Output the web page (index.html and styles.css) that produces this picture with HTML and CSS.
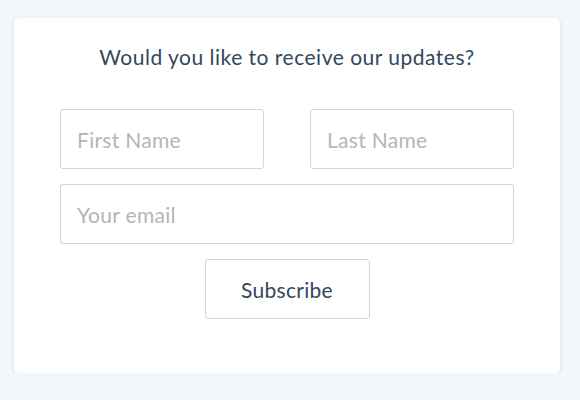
FILE: index.html
```html
<!DOCTYPE html>
<html lang="en">
<head>
    <meta charset="UTF-8">
    <title>Newsletter</title>
    <link rel="stylesheet" href="styles.css">
</head>
<body>
    <section class="signup-card">
        <h2 class="signup-title">Would you like to receive our updates?</h2>
        <form class="signup-form">
            <div class="name-row">
                <input type="text" class="field" placeholder="First Name">
                <input type="text" class="field" placeholder="Last Name">
            </div>
            <input type="email" class="field" placeholder="Your email">
            <button type="submit" class="subscribe-btn">Subscribe</button>
        </form>
    </section>
</body>
</html>
```

FILE: styles.css
```css
body {
    font-family: 'Lato', 'Noto Sans', sans-serif;
    margin: 0;
    padding: 18px 20px 0 14px;
    background-color: #f3f6fa;
    color: #33475b;
}

.signup-card {
    background-color: #fff;
    border-radius: 5px;
    height: 355px;
    box-sizing: border-box;
    padding-top: 25px;
    box-shadow: 0 1px 4px rgba(45, 62, 80, 0.12);
}

.signup-title {
    margin: 0 0 38px;
    font-size: 21px;
    font-weight: 400;
    line-height: 28px;
    text-align: center;
    letter-spacing: 0.5px;
}

.signup-form {
    width: 454px;
    margin: 0 auto;
    display: flex;
    flex-direction: column;
    align-items: center;
    gap: 15px;
}

.name-row {
    width: 100%;
    display: flex;
    justify-content: space-between;
}

.field {
    box-sizing: border-box;
    width: 100%;
    height: 60px;
    padding: 0 16px;
    border: 1px solid #cbd6e2;
    border-radius: 3px;
    font-family: inherit;
    font-size: 21px;
    letter-spacing: 0.3px;
    color: #33475b;
    background-color: #fff;
    outline: none;
}

.name-row .field {
    width: 204px;
}

.field::placeholder {
    color: #b5b5b5;
}

.subscribe-btn {
    width: 165px;
    height: 60px;
    border: 1px solid #cbd6e2;
    border-radius: 3px;
    background-color: #fff;
    font-family: inherit;
    font-size: 21px;
    letter-spacing: 0.3px;
    color: #33475b;
    cursor: pointer;
}
```
